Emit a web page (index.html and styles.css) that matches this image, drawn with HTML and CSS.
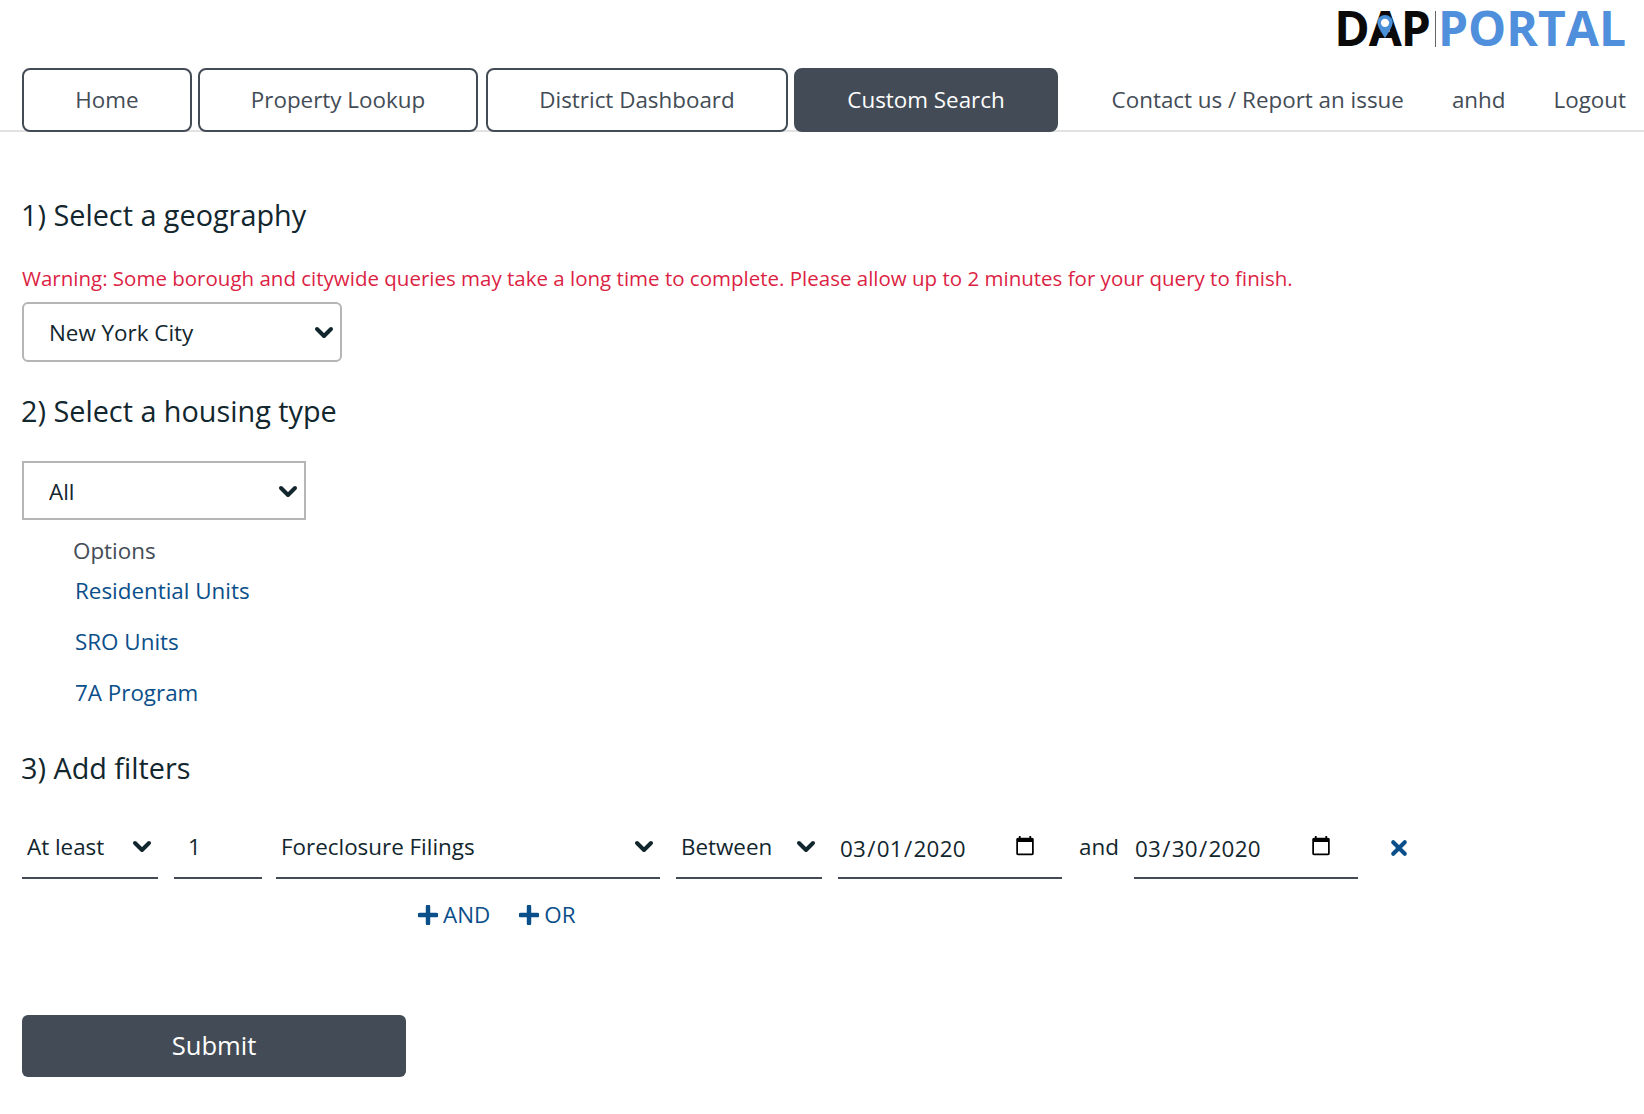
FILE: index.html
```html
<!DOCTYPE html>
<html lang="en">
<head>
<meta charset="utf-8">
<title>DAP Portal</title>
<link rel="stylesheet" href="styles.css">
</head>
<body>
<header class="header">
  <div class="logo-row">
    <div class="logo">
      <span class="logo-dap">D<span class="logo-a">A<svg class="logo-pin" viewBox="0 0 20 30" aria-hidden="true"><path fill="#4a90d9" d="M10 0C4.5 0 0 4.4 0 9.9 0 16.5 10 30 10 30S20 16.5 20 9.9C20 4.4 15.5 0 10 0Z"/><circle cx="10" cy="10.2" r="5.4" fill="#fff"/></svg></span>P</span><span class="logo-sep"></span><span class="logo-portal">PORTAL</span>
    </div>
  </div>
  <nav class="nav">
    <div class="nav-tabs">
      <a class="tab tab-home">Home</a>
      <a class="tab tab-prop">Property Lookup</a>
      <a class="tab tab-dist">District Dashboard</a>
      <a class="tab tab-custom">Custom Search</a>
    </div>
    <div class="nav-links">
      <a>Contact us / Report an issue</a>
      <a>anhd</a>
      <a>Logout</a>
    </div>
  </nav>
</header>
<main class="main">
  <h2 class="step step-1">1) Select a geography</h2>
  <p class="warning">Warning: Some borough and citywide queries may take a long time to complete. Please allow up to 2 minutes for your query to finish.</p>
  <select class="box-select geo"><option>New York City</option></select>
  <h2 class="step step-2">2) Select a housing type</h2>
  <select class="box-select housing"><option>All</option></select>
  <div class="options">
    <div class="options-title">Options</div>
    <a class="option">Residential Units</a>
    <a class="option">SRO Units</a>
    <a class="option">7A Program</a>
  </div>
  <h2 class="step step-3">3) Add filters</h2>
  <div class="filter-row">
    <select class="line-select f-cmp"><option>At least</option></select>
    <input class="line-input f-num" type="text" value="1">
    <select class="line-select f-type"><option>Foreclosure Filings</option></select>
    <select class="line-select f-range"><option>Between</option></select>
    <input class="line-input f-date" type="date" value="2020-03-01">
    <span class="and">and</span>
    <input class="line-input f-date" type="date" value="2020-03-30">
    <svg class="remove" viewBox="0 0 14 14" aria-hidden="true"><path d="M2.5 2.5l9 9M11.5 2.5l-9 9" stroke="#0b4f8a" stroke-width="3.2" stroke-linecap="round" fill="none"/></svg>
  </div>
  <div class="adders">
    <a class="adder"><svg class="plus" viewBox="0 0 18 18" aria-hidden="true"><path d="M9 1.5v15M1.5 9h15" stroke="#0b4f8a" stroke-width="4" stroke-linecap="round" fill="none"/></svg>AND</a>
    <a class="adder"><svg class="plus" viewBox="0 0 18 18" aria-hidden="true"><path d="M9 1.5v15M1.5 9h15" stroke="#0b4f8a" stroke-width="4" stroke-linecap="round" fill="none"/></svg>OR</a>
  </div>
  <button class="submit" type="button">Submit</button>
</main>
</body>
</html>
```
FILE: styles.css
```css
* { box-sizing: border-box; }
html, body { margin: 0; padding: 0; }
body {
  font-family: "Open Sans", sans-serif;
  font-size: 22.4px;
  color: #12262e;
  background: #fff;
  width: 1644px;
  height: 1114px;
  overflow: hidden;
}
.header { display: flex; flex-direction: column; }
.logo-row { display: flex; justify-content: flex-end; height: 68px; padding-right: 18px; }
.logo { display: flex; align-items: flex-start; font-weight: 700; font-size: 48px; line-height: 56px; }
.logo-dap { color: #0a0a0a; letter-spacing: -1px; }
.logo-a { position: relative; display: inline-block; }
.logo-pin { position: absolute; left: 7px; top: 15px; width: 18px; height: 23px; }
.logo-sep { width: 1px; height: 36px; margin: 11px 2px 0 5px; background: #666; }
.logo-portal { color: #4f8fdb; }
.nav { display: flex; justify-content: space-between; align-items: center; height: 64px; border-bottom: 2px solid #e2e2e2; padding: 0 18px 0 22px; }
.nav-tabs { display: flex; gap: 6px; margin-bottom: -2px; }
.tab { display: flex; align-items: center; justify-content: center; height: 64px; padding-bottom: 2px; border: 2px solid #434c56; border-radius: 8px; color: #434c56; background: #fff; }
.tab-home { width: 170px; }
.tab-prop { width: 280px; margin-right: 2px; }
.tab-dist { width: 302px; }
.tab-custom { width: 264px; background: #434c56; color: #fff; }
.nav-links { display: flex; gap: 48px; color: #434c56; }
.main { padding: 0 22px; display: flex; flex-direction: column; align-items: flex-start; }
.step { margin: 0 0 0 -1px; font-weight: 400; font-size: 28.8px; line-height: 40px; color: #12262e; }
.step-1 { margin-top: 63px; }
.warning { margin: 26px 0 1px; line-height: 34px; font-size: 20.5px; color: #dc1f45; }
.box-select, .line-select {
  appearance: none;
  font: inherit;
  color: #12262e;
  background-color: #fff;
  background-image: url("data:image/svg+xml,%3Csvg xmlns='http://www.w3.org/2000/svg' viewBox='0 0 20 14'%3E%3Cpath d='M3 3l7 7 7-7' stroke='%2312262e' stroke-width='4' fill='none' stroke-linecap='round' stroke-linejoin='round'/%3E%3C/svg%3E");
  background-repeat: no-repeat;
  background-size: 20px 14px;
}
.box-select { border: 2px solid #b5b5b5; background-position: right 6px top calc(50% + 1px); }
.geo { width: 320px; height: 60px; padding: 0 0 0 25px; border-radius: 6px; margin-top: 6px; }
.step-2 { margin-top: 29px; }
.housing { width: 284px; height: 59px; padding: 1px 0 0 25px; margin-top: 30px; border-radius: 0; }
.options { display: flex; flex-direction: column; align-items: flex-start; padding-left: 51px; margin-top: 15px; }
.options-title { color: #434c56; line-height: 32px; }
.option { color: #0b4f8a; line-height: 32px; margin: 9px 0 10px 2px; }
.options-title + .option { margin-top: 8px; }
.step-3 { margin-top: 29px; }
.filter-row { display: flex; align-items: flex-start; margin-top: 29px; height: 62px; }
.line-select, .line-input { height: 62px; border: 0; border-bottom: 2px solid #434c56; border-radius: 0; background-color: #fff; font: inherit; color: #12262e; outline: none; }
.line-select { padding: 0 0 2px 5px; background-position: right 6px center; }
.f-cmp { width: 136px; }
.f-num { width: 88px; margin-left: 16px; padding: 0 0 2px 14px; }
.f-type { width: 384px; margin-left: 14px; }
.f-range { width: 146px; margin-left: 16px; }
.f-date { width: 224px; margin-left: 16px; padding: 2px 24px 0 1px; letter-spacing: 0.3px; }
.f-date::-webkit-calendar-picker-indicator { margin-top: -4px; opacity: 1; }
.and { width: 72px; padding-left: 2px; text-align: center; line-height: 60px; }
.and + .f-date { margin-left: 0; padding-left: 0; }
.remove { width: 18px; height: 18px; margin: 22px 0 0 32px; }
.adders { display: flex; gap: 29px; margin: 20px 0 0 396px; }
.adder { display: flex; align-items: center; gap: 5px; color: #0b4f8a; line-height: 32px; }
.plus { width: 20px; height: 20px; }
.submit { margin-top: 84px; padding-bottom: 2px; width: 384px; height: 62px; border: 0; border-radius: 6px; background: #434c56; color: #fff; font: inherit; font-size: 25.6px; }
```
